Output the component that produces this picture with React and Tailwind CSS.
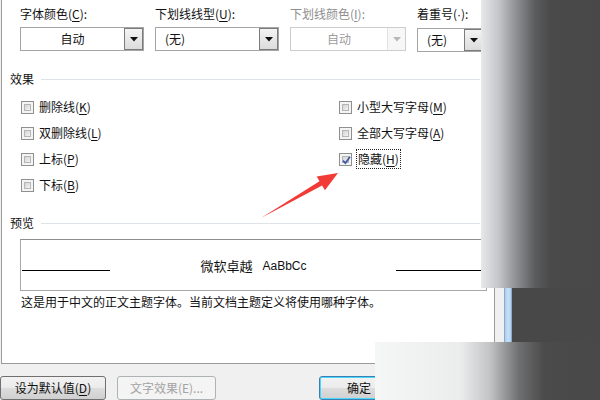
import React from 'react';

const font = "font-['Noto_Sans_CJK_SC','Microsoft_YaHei',sans-serif]";

function Mn({ children }) {
  return <span className="underline underline-offset-2">{children}</span>;
}

function Arrow({ disabled }) {
  return (
    <svg width="8" height="5" viewBox="0 0 8 5">
      <polygon points="0,0 8,0 4,4.5" fill={disabled ? '#b8b8b8' : '#111'} />
    </svg>
  );
}

function Dropdown({ value, center, disabled, width }) {
  return (
    <div className={`flex h-[24px] bg-white border ${width} ${disabled ? 'border-[#cdcdcd] text-[#9c9c9c]' : 'border-[#a5a5a5] text-[#111]'}`}>
      <div className={`flex-1 flex items-center text-[12px] ${center ? 'justify-center' : 'pl-[9px]'}`}>{value}</div>
      {disabled ? (
        <div className="w-[18px] flex items-center justify-center border-l border-[#e2e2e2] bg-[#f7f7f7]">
          <Arrow disabled />
        </div>
      ) : (
        <div className="w-[19px] flex items-center justify-center border border-[#7b7b7b] bg-[linear-gradient(to_bottom,#f4f4f4,#dcdcdc)]">
          <Arrow />
        </div>
      )}
    </div>
  );
}

function Checkbox({ checked }) {
  return (
    <div className="w-[13px] h-[13px] border border-[#8e8f8f] bg-[#f4f4f4] p-[2px] shrink-0">
      <div className="relative w-full h-full border border-[#b3b5b7] bg-[linear-gradient(135deg,#d3d4d6,#f3f3f3)]">
        {checked && (
          <svg className="absolute -left-[2px] -top-[2px]" width="11" height="11" viewBox="0 0 11 11">
            <path d="M2 5.6 L4.4 8.2 L9 1.8" stroke="#3f56a6" strokeWidth="1.8" fill="none" />
          </svg>
        )}
      </div>
    </div>
  );
}

function CheckRow({ label, checked, focus }) {
  return (
    <div className="h-[26px] flex items-center">
      <Checkbox checked={checked} />
      <div className={`ml-[4px] text-[12px] text-[#111] leading-[16px] ${focus ? 'border border-dotted border-[#222] px-[1px] py-[1px]' : 'ml-[5px]'}`}>
        {label}
      </div>
    </div>
  );
}

function Section({ title }) {
  return (
    <div className="flex items-center pl-[8px] pr-[14px] h-[16px]">
      <span className="text-[12px] text-[#111] leading-[16px]">{title}</span>
      <div className="flex-1 h-px bg-[#dde3e9] ml-[7px]" />
    </div>
  );
}

export default function App() {
  return (
    <div className={`relative w-[600px] h-[400px] overflow-hidden flex bg-[#484848] ${font}`}>
      {/* dialog */}
      <div className="w-[504px] h-full bg-[#f0f0f0] flex flex-col">
        <div className="ml-[1px] w-[494px] h-[364px] bg-white border-l border-r border-b border-[#9b9b9b] flex flex-col">
          {/* font colour / underline row */}
          <div className="flex gap-[11px] pl-[18px] pt-[6px]">
            <div className="w-[124px]">
              <div className="text-[12px] leading-[16px] text-[#111]">字体颜色(<Mn>C</Mn>):</div>
              <div className="mt-[5px]"><Dropdown value="自动" center width="w-[124px]" /></div>
            </div>
            <div className="w-[124px]">
              <div className="text-[12px] leading-[16px] text-[#111]">下划线线型(<Mn>U</Mn>):</div>
              <div className="mt-[5px]"><Dropdown value="(无)" width="w-[124px]" /></div>
            </div>
            <div className="w-[116px]">
              <div className="text-[12px] leading-[16px] text-[#8d8d8d]">下划线颜色(<Mn>I</Mn>):</div>
              <div className="mt-[5px]"><Dropdown value="自动" center disabled width="w-[116px]" /></div>
            </div>
            <div className="w-[70px]">
              <div className="text-[12px] leading-[16px] text-[#111] whitespace-nowrap">
                着重号(<span className="font-['Liberation_Sans',sans-serif]">·</span>):
              </div>
              <div className="mt-[5px]"><Dropdown value="(无)" width="w-[67px]" /></div>
            </div>
          </div>

          {/* effects */}
          <div className="mt-[19px]"><Section title="效果" /></div>
          <div className="flex mt-[7px] pl-[19px]">
            <div className="w-[318px]">
              <CheckRow label={<>删除线(<Mn>K</Mn>)</>} />
              <CheckRow label={<>双删除线(<Mn>L</Mn>)</>} />
              <CheckRow label={<>上标(<Mn>P</Mn>)</>} />
              <CheckRow label={<>下标(<Mn>B</Mn>)</>} />
            </div>
            <div>
              <CheckRow label={<>小型大写字母(<Mn>M</Mn>)</>} />
              <CheckRow label={<>全部大写字母(<Mn>A</Mn>)</>} />
              <CheckRow label={<>隐藏(<Mn>H</Mn>)</>} checked focus />
            </div>
          </div>

          {/* preview */}
          <div className="mt-[17px]"><Section title="预览" /></div>
          <div className="ml-[18px] mt-[8px] w-[467px] h-[52px] border border-[#a8a8a8] border-t-[#8e8e8e] flex pt-[16px]">
            <div className="flex-1 pt-[14px]">
              <div className="ml-[1px] w-[88px] h-px bg-black" />
            </div>
            <div className="h-[20px] flex items-center whitespace-nowrap">
              <span className="text-[13px] text-[#111]">微软卓越</span>
              <span className="ml-[10px] text-[12px] text-[#111] font-['Liberation_Sans',sans-serif]">AaBbCc</span>
            </div>
            <div className="flex-1 pt-[14px] flex justify-end">
              <div className="mr-[1px] w-[89px] h-px bg-black" />
            </div>
          </div>
          <div className="mt-[3px] pl-[19px] text-[12px] leading-[16px] text-[#111]">
            这是用于中文的正文主题字体。当前文档主题定义将使用哪种字体。
          </div>
        </div>

        {/* buttons */}
        <div className="flex pt-[12px]">
          <button className="w-[106px] h-[24px] rounded-[3px] border border-[#707070] bg-[linear-gradient(to_bottom,#f2f2f2_0%,#ebebeb_50%,#dddddd_51%,#cfcfcf_100%)] text-[12px] text-[#111]">
            设为默认值(<Mn>D</Mn>)
          </button>
          <button className="ml-[11px] w-[99px] h-[24px] rounded-[3px] border border-[#adb2b5] bg-[#f4f4f4] text-[12px] text-[#a3a3a3]">
            文字效果(E)...
          </button>
          <button className="ml-[103px] w-[80px] h-[24px] rounded-[3px] border border-[#3c7fb1] shadow-[inset_0_0_0_1px_#48d8ff] bg-[linear-gradient(to_bottom,#f2f2f2_0%,#ebebeb_50%,#dddddd_51%,#cfcfcf_100%)] text-[12px] text-[#111] text-left pl-[27px]">
            确定
          </button>
        </div>
      </div>

      {/* window frame strip */}
      <div className="w-[8px] h-full border-l border-r border-[#8ea9c6] bg-[linear-gradient(to_right,#a8ccef,#c6e0f7,#b2d2f0)]" />
      <div className="flex-1 h-full bg-[#484848]" />

      {/* red arrow */}
      <svg className="absolute left-0 top-0 pointer-events-none" width="600" height="400">
        <polygon
          points="261,218 319.5,181.2 316.7,176.4 338,173 324.9,190.2 322.1,185.4"
          fill="#f23a36"
        />
      </svg>

      {/* faded crop edges */}
      <div className="absolute left-[481px] top-0 w-[119px] h-[288px] bg-[linear-gradient(to_right,#e7e8ea_0%,#c3c5c8_15%,#8c8e91_30%,#5c5d5f_45%,#4a4a4a_58%,#484848_100%)]" />
      <div className="absolute left-[375px] top-[342px] w-[225px] h-[58px] bg-[linear-gradient(to_right,#f5f6f6_0%,#ebecec_38%,#c2c4c6_51%,#6e6f71_64%,#4b4b4b_75%,#484848_100%)]" />
    </div>
  );
}
